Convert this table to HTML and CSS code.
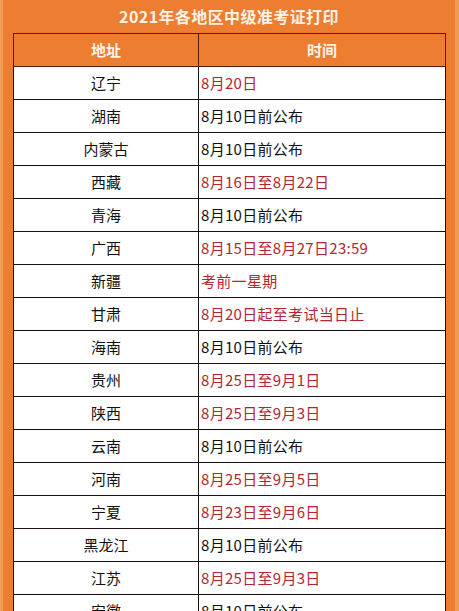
FILE: index.html
```html
<!DOCTYPE html>
<html lang="zh-CN">
<head>
<meta charset="utf-8">
<link rel="stylesheet" href="styles.css">
</head>
<body>
<div class="page">
  <div class="title">2021年各地区中级准考证打印</div>
  <table class="tbl">
    <thead>
      <tr><th class="c1">地址</th><th class="c2">时间</th></tr>
    </thead>
    <tbody>
      <tr><td class="c1">辽宁</td><td class="c2 red">8月20日</td></tr>
      <tr><td class="c1">湖南</td><td class="c2">8月10日前公布</td></tr>
      <tr><td class="c1">内蒙古</td><td class="c2">8月10日前公布</td></tr>
      <tr><td class="c1">西藏</td><td class="c2 red">8月16日至8月22日</td></tr>
      <tr><td class="c1">青海</td><td class="c2">8月10日前公布</td></tr>
      <tr><td class="c1">广西</td><td class="c2 red">8月15日至8月27日23:59</td></tr>
      <tr><td class="c1">新疆</td><td class="c2 red">考前一星期</td></tr>
      <tr><td class="c1">甘肃</td><td class="c2 red">8月20日起至考试当日止</td></tr>
      <tr><td class="c1">海南</td><td class="c2">8月10日前公布</td></tr>
      <tr><td class="c1">贵州</td><td class="c2 red">8月25日至9月1日</td></tr>
      <tr><td class="c1">陕西</td><td class="c2 red">8月25日至9月3日</td></tr>
      <tr><td class="c1">云南</td><td class="c2">8月10日前公布</td></tr>
      <tr><td class="c1">河南</td><td class="c2 red">8月25日至9月5日</td></tr>
      <tr><td class="c1">宁夏</td><td class="c2 red">8月23日至9月6日</td></tr>
      <tr><td class="c1">黑龙江</td><td class="c2">8月10日前公布</td></tr>
      <tr><td class="c1">江苏</td><td class="c2 red">8月25日至9月3日</td></tr>
      <tr><td class="c1">安徽</td><td class="c2">8月10日前公布</td></tr>
    </tbody>
  </table>
</div>
</body>
</html>
```
FILE: styles.css
```css
html, body {
  margin: 0;
  padding: 0;
  background: #ed7d31;
}
body {
  font-family: "Noto Sans CJK SC", "Noto Sans", sans-serif;
  width: 459px;
  height: 611px;
  overflow: hidden;
  border-left: 3px solid #f09a55;
  border-right: 4px solid #f09a55;
  box-sizing: border-box;
}
.page {
  padding: 0 10px 0 10px;
}
.title {
  height: 33px;
  line-height: 33px;
  text-align: center;
  color: #fff2e6;
  font-weight: bold;
  font-size: 16px;
  letter-spacing: 0.4px;
}
.tbl {
  border-collapse: collapse;
  width: 433px;
  table-layout: fixed;
  font-size: 15px;
}
.tbl th, .tbl td {
  height: 33px;
  padding: 0;
  box-sizing: border-box;
  border: 1px solid #1a1010;
  line-height: 20px;
}
.tbl th {
  background: #ed7d31;
  color: #fff4ea;
  font-weight: bold;
  border-color: #5c1a0c;
  text-align: center;
}
.tbl td {
  background: #ffffff;
  color: #111;
}
.c1 { width: 185px; text-align: center; }
.tbl td.c2 { text-align: left; padding-left: 2px; letter-spacing: 0.3px; }
.tbl th.c2 { text-align: center; }
.red { color: #b42530 !important; }
```
